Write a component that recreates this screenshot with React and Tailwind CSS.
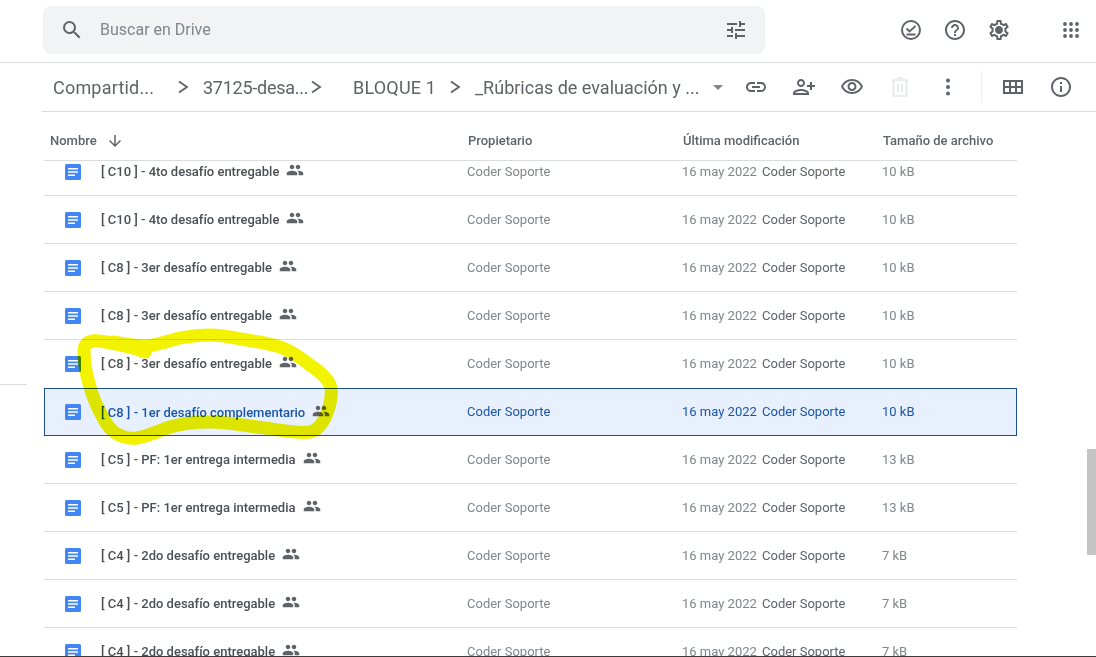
import React from 'react';

const P = {
  search: 'M15.5 14h-.79l-.28-.27A6.471 6.471 0 0 0 16 9.5 6.5 6.5 0 1 0 9.5 16c1.61 0 3.09-.59 4.23-1.57l.27.28v.79l5 4.99L20.49 19l-4.99-5zm-6 0C7.01 14 5 11.99 5 9.5S7.01 5 9.5 5 14 7.01 14 9.5 11.99 14 9.5 14z',
  tune: 'M3 17v2h6v-2H3zM3 5v2h10V5H3zm10 16v-2h8v-2h-8v-2h-2v6h2zM7 9v2H3v2h4v2h2V9H7zm14 4v-2H11v2h10zm-6-4h2V7h4V5h-4V3h-2v6z',
  help: 'M11 18h2v-2h-2v2zm1-16C6.48 2 2 6.48 2 12s4.48 10 10 10 10-4.48 10-10S17.52 2 12 2zm0 18c-4.41 0-8-3.59-8-8s3.59-8 8-8 8 3.59 8 8-3.59 8-8 8zm0-14c-2.21 0-4 1.79-4 4h2c0-1.1.9-2 2-2s2 .9 2 2c0 2-3 1.75-3 5h2c0-2.25 3-2.5 3-5 0-2.21-1.79-4-4-4z',
  settings: 'M19.43 12.98c.04-.32.07-.64.07-.98 0-.34-.03-.66-.07-.98l2.11-1.65c.19-.15.24-.42.12-.64l-2-3.46c-.09-.16-.26-.25-.44-.25-.06 0-.12.01-.17.03l-2.49 1c-.52-.4-1.08-.73-1.69-.98l-.38-2.65C14.46 2.18 14.25 2 14 2h-4c-.25 0-.46.18-.49.42l-.38 2.65c-.61.25-1.17.59-1.69.98l-2.49-1c-.06-.02-.12-.03-.18-.03-.17 0-.34.09-.43.25l-2 3.46c-.13.22-.07.49.12.64l2.11 1.65c-.04.32-.07.65-.07.98 0 .33.03.66.07.98l-2.11 1.65c-.19.15-.24.42-.12.64l2 3.46c.09.16.26.25.44.25.06 0 .12-.01.17-.03l2.49-1c.52.4 1.08.73 1.69.98l.38 2.65c.03.24.24.42.49.42h4c.25 0 .46-.18.49-.42l.38-2.65c.61-.25 1.17-.59 1.69-.98l2.49 1c.06.02.12.03.18.03.17 0 .34-.09.43-.25l2-3.46c.12-.22.07-.49-.12-.64l-2.11-1.65zm-1.98-1.71c.04.31.05.52.05.73 0 .21-.02.43-.05.73l-.14 1.13.89.7 1.08.84-.7 1.21-1.27-.51-1.04-.42-.9.68c-.43.32-.84.56-1.25.73l-1.06.43-.16 1.13-.2 1.35h-1.4l-.19-1.35-.16-1.13-1.06-.43c-.43-.18-.83-.41-1.23-.71l-.91-.7-1.06.43-1.27.51-.7-1.21 1.08-.84.89-.7-.14-1.13c-.03-.31-.05-.54-.05-.74s.02-.43.05-.73l.14-1.13-.89-.7-1.08-.84.7-1.21 1.27.51 1.04.42.9-.68c.43-.32.84-.56 1.25-.73l1.06-.43.16-1.13.2-1.35h1.39l.19 1.35.16 1.13 1.06.43c.43.18.83.41 1.23.71l.91.7 1.06-.43 1.27-.51.7 1.21-1.07.85-.89.7.14 1.13zM12 8c-2.21 0-4 1.79-4 4s1.79 4 4 4 4-1.79 4-4-1.79-4-4-4z',
  link: 'M3.9 12c0-1.71 1.39-3.1 3.1-3.1h4V7H7c-2.76 0-5 2.24-5 5s2.24 5 5 5h4v-1.9H7c-1.71 0-3.1-1.39-3.1-3.1zM8 13h8v-2H8v2zm9-6h-4v1.9h4c1.71 0 3.1 1.39 3.1 3.1s-1.39 3.1-3.1 3.1h-4V17h4c2.76 0 5-2.24 5-5s-2.24-5-5-5z',
  eye: 'M12 6c3.79 0 7.17 2.13 8.82 5.5C19.17 14.87 15.79 17 12 17s-7.17-2.13-8.82-5.5C4.83 8.13 8.21 6 12 6m0-2C7 4 2.73 7.11 1 11.5 2.73 15.89 7 19 12 19s9.27-3.11 11-7.5C21.27 7.11 17 4 12 4zm0 5c1.38 0 2.5 1.12 2.5 2.5S13.38 14 12 14s-2.5-1.12-2.5-2.5S10.62 9 12 9m0-2c-2.48 0-4.5 2.02-4.5 4.5S9.52 16 12 16s4.5-2.02 4.5-4.5S14.48 7 12 7z',
  info: 'M11 7h2v2h-2zm0 4h2v6h-2zm1-9C6.48 2 2 6.48 2 12s4.48 10 10 10 10-4.48 10-10S17.52 2 12 2zm0 18c-4.41 0-8-3.59-8-8s3.59-8 8-8 8 3.59 8 8-3.59 8-8 8z',
  personAdd: 'M9 12c2.21 0 4-1.79 4-4s-1.79-4-4-4-4 1.79-4 4 1.79 4 4 4zm0-6c1.1 0 2 .9 2 2s-.9 2-2 2-2-.9-2-2 .9-2 2-2zm0 8c-2.67 0-8 1.34-8 4v2h16v-2c0-2.66-5.33-4-8-4zm-6 4c.22-.72 3.31-2 6-2 2.7 0 5.8 1.29 6 2H3zm17-3v-3h3v-2h-3V7h-2v3h-3v2h3v3h2z',
  people: 'M16 11c1.66 0 2.99-1.34 2.99-3S17.66 5 16 5c-1.66 0-3 1.34-3 3s1.34 3 3 3zm-8 0c1.66 0 2.99-1.34 2.99-3S9.66 5 8 5C6.34 5 5 6.34 5 8s1.34 3 3 3zm0 2c-2.33 0-7 1.17-7 3.5V19h14v-2.5c0-2.33-4.67-3.5-7-3.5zm8 0c-.29 0-.62.02-.97.05 1.16.84 1.97 1.97 1.97 3.45V19h6v-2.5c0-2.33-4.67-3.5-7-3.5z',
  arrowDown: 'M20 12l-1.41-1.41L13 16.17V4h-2v12.17l-5.58-5.59L4 12l8 8 8-8z',
};

function Icon({ d, className = 'w-6 h-6 text-[#5f6368]' }) {
  return (
    <svg viewBox="0 0 24 24" fill="currentColor" className={className}>
      <path d={d} />
    </svg>
  );
}

function Chevron() {
  return (
    <svg viewBox="0 0 20 20" fill="none" stroke="#5f6368" strokeWidth="1.8" className="w-5 h-5 shrink-0">
      <path d="M6 4.5l8 5.5-8 5.5" />
    </svg>
  );
}

function DocIcon() {
  return (
    <svg viewBox="0 0 16 16" className="w-4 h-4 shrink-0">
      <rect width="16" height="16" rx="1.5" fill="#4285f4" />
      <path d="M3 4h10v1.6H3zM3 7.2h10v1.6H3zM3 10.4h7V12H3z" fill="#fff" />
    </svg>
  );
}

function ToolSlot({ children, className = 'w-12' }) {
  return <div className={`flex justify-center items-center shrink-0 ${className}`}>{children}</div>;
}

function Crumb({ children, className }) {
  return <span className={`text-[18px] text-[#5f6368] whitespace-nowrap shrink-0 ${className}`}>{children}</span>;
}

const rows = [
  { name: '[ C10 ] - 4to desafío entregable', size: '10 kB' },
  { name: '[ C10 ] - 4to desafío entregable', size: '10 kB' },
  { name: '[ C8 ] - 3er desafío entregable', size: '10 kB' },
  { name: '[ C8 ] - 3er desafío entregable', size: '10 kB' },
  { name: '[ C8 ] - 3er desafío entregable', size: '10 kB', noLine: true },
  { name: '[ C8 ] - 1er desafío complementario', size: '10 kB', selected: true },
  { name: '[ C5 ] - PF: 1er entrega intermedia', size: '13 kB' },
  { name: '[ C5 ] - PF: 1er entrega intermedia', size: '13 kB' },
  { name: '[ C4 ] - 2do desafío entregable', size: '7 kB' },
  { name: '[ C4 ] - 2do desafío entregable', size: '7 kB' },
  { name: '[ C4 ] - 2do desafío entregable', size: '7 kB' },
];

function Row({ row }) {
  const sel = row.selected;
  let box = 'border-b border-[#dadce0]';
  if (row.noLine) box = 'border-b border-white';
  if (sel) box = 'border border-[#1c4f91] bg-[#e8f0fe] text-[#1a56a8]';
  return (
    <div className={`flex items-center h-12 text-[13px] ${box}`}>
      <div className={sel ? 'w-[20px] shrink-0' : 'w-[21px] shrink-0'} />
      <DocIcon />
      <div className="w-[20px] shrink-0" />
      <div className="w-[366px] shrink-0 flex items-center">
        <span className={`font-medium whitespace-nowrap mt-px ${sel ? '' : 'text-[#4b4f54]'}`}>{row.name}</span>
        <Icon d={P.people} className="w-[18px] h-[18px] ml-[7px] -mt-[3px] text-[#5f6368]" />
      </div>
      <div className={`w-[215px] shrink-0 ${sel ? '' : 'text-[#80868b]'}`}>Coder Soporte</div>
      <div className={`w-[80px] shrink-0 ${sel ? '' : 'text-[#80868b]'}`}>16 may 2022</div>
      <div className={`w-[120px] shrink-0 ${sel ? '' : 'text-[#5f6368]'}`}>Coder Soporte</div>
      <div className={sel ? '' : 'text-[#80868b]'}>{row.size}</div>
    </div>
  );
}

export default function App() {
  return (
    <div className="relative h-[657px] w-[1096px] overflow-hidden bg-white border-b border-[#3c3c3c] flex flex-col font-['Roboto',sans-serif]">
      {/* top bar */}
      <header className="h-[63px] shrink-0 flex items-center border-b border-[#dadce0]">
        <div className="ml-[43px] w-[722px] h-12 rounded-lg bg-[#f1f3f4] flex items-center shrink-0 -mt-[2px]">
          <Icon d={P.search} className="w-6 h-6 ml-[17px] text-[#5f6368]" />
          <span className="ml-4 text-[16px] text-[#80868b]">Buscar en Drive</span>
          <Icon d={P.tune} className="w-6 h-6 ml-auto mr-[17px] text-[#5f6368]" />
        </div>
        <div className="w-[134px] shrink-0" />
        <svg viewBox="0 0 24 24" fill="none" stroke="#5f6368" strokeWidth="2" className="w-6 h-6 shrink-0 -mt-[2px]">
          <circle cx="12" cy="12" r="9" />
          <path d="M7.5 10.5l3 3 6-5.5M7.5 16.5h9" strokeWidth="1.8" />
        </svg>
        <Icon d={P.help} className="w-6 h-6 ml-5 shrink-0 -mt-[2px] text-[#5f6368]" />
        <Icon d={P.settings} className="w-6 h-6 ml-5 shrink-0 -mt-[2px] text-[#5f6368]" />
        <svg viewBox="0 0 24 24" fill="#5f6368" className="w-6 h-6 ml-12 shrink-0 -mt-[2px]">
          {[6, 12, 18].flatMap((y) =>
            [6, 12, 18].map((x) => <circle key={`${x}-${y}`} cx={x} cy={y} r="1.9" />)
          )}
        </svg>
      </header>

      {/* breadcrumb and tools */}
      <div className="ml-[42px] h-[49px] shrink-0 flex items-center border-b border-[#dadce0]">
        <Crumb className="ml-[11px] w-[120px] tracking-[0.2px]">Compartid...</Crumb>
        <Chevron />
        <Crumb className="ml-[10px] w-[103px] tracking-[-0.25px]">37125-desa...</Crumb>
        <Chevron />
        <Crumb className="ml-[27px] w-[92px] tracking-[0.2px]">BLOQUE 1</Crumb>
        <Chevron />
        <Crumb className="ml-[10px] w-[233px]">_Rúbricas de evaluación y ...</Crumb>
        <div className="ml-[5px] shrink-0 w-0 h-0 border-x-[5px] border-x-transparent border-t-[5px] border-t-[#80868b]" />
        <ToolSlot className="w-12 ml-[9px]"><Icon d={P.link} /></ToolSlot>
        <ToolSlot><Icon d={P.personAdd} /></ToolSlot>
        <ToolSlot><Icon d={P.eye} /></ToolSlot>
        <ToolSlot>
          <svg viewBox="0 0 24 24" fill="none" stroke="#e3e5e7" strokeWidth="1.6" className="w-6 h-6">
            <path d="M4.5 5h15M9 3h6M5.5 5v16h13V5M10 9v8M14 9v8" />
          </svg>
        </ToolSlot>
        <ToolSlot>
          <svg viewBox="0 0 24 24" fill="#5f6368" className="w-6 h-6">
            <circle cx="12" cy="5.5" r="2" />
            <circle cx="12" cy="12" r="2" />
            <circle cx="12" cy="18.5" r="2" />
          </svg>
        </ToolSlot>
        <div className="ml-[9px] w-px h-8 bg-[#eceef0] shrink-0" />
        <ToolSlot className="w-12 ml-[7px]">
          <svg viewBox="0 0 24 24" fill="none" stroke="#5f6368" strokeWidth="2" className="w-6 h-6">
            <path d="M3 6h18v12H3zM3 12h18M9 6v12M15 6v12" />
          </svg>
        </ToolSlot>
        <ToolSlot><Icon d={P.info} /></ToolSlot>
      </div>

      {/* file list */}
      <div className="ml-[44px] w-[973px] flex-1 min-h-0 flex flex-col">
        <div className="h-[49px] shrink-0 flex items-center border-b border-[#dadce0] text-[13px] font-medium text-[#5f6368] pt-[9px]">
          <div className="w-[424px] shrink-0 flex items-center pl-[6px]">
            <span>Nombre</span>
            <Icon d={P.arrowDown} className="w-[18px] h-[18px] ml-[9px] text-[#5f6368]" />
          </div>
          <span className="w-[215px] shrink-0">Propietario</span>
          <span className="w-[200px] shrink-0">Última modificación</span>
          <span>Tamaño de archivo</span>
        </div>
        <div className="flex-1 min-h-0 overflow-hidden">
          <div className="-mt-[13px]">
            {rows.map((r, i) => (
              <Row key={i} row={r} />
            ))}
          </div>
        </div>
      </div>

      {/* stray sidebar divider */}
      <div className="absolute left-0 top-[384px] w-[27px] h-px bg-[#dadce0]" />
      {/* scrollbar thumb */}
      <div className="absolute left-[1087px] top-[449px] w-[9px] h-[106px] bg-[#c4c4c4]" />

      {/* yellow marker scribble */}
      <svg className="absolute inset-0 w-[1096px] h-[657px] mix-blend-multiply pointer-events-none" viewBox="0 0 1096 657" fill="none">
        <path
          d="M145 352 C135 348 128 346 120 345 C110 343 100 340 93 341 C86 342 84 345 84 352 C84 360 85 368 87 376 C90 388 93 398 98 408 C103 418 107 427 114 432 C121 437 128 439 137 438 C148 436 158 431 170 427 C183 423 197 422 210 422 C226 422 241 425 257 427 C275 429 298 434 310 432 C319 430 324 421 327 413 C330 405 332 396 331 388 C329 379 319 371 310 365 C301 358 293 352 283 348 C272 344 259 342 247 340 C235 338 222 335 210 335 C200 335 190 336 180 338 C168 341 158 345 147 346 C135 346 124 344 113 342"
          stroke="#f3f300"
          strokeWidth="13"
          strokeLinecap="round"
          strokeLinejoin="round"
        />
      </svg>
    </div>
  );
}
